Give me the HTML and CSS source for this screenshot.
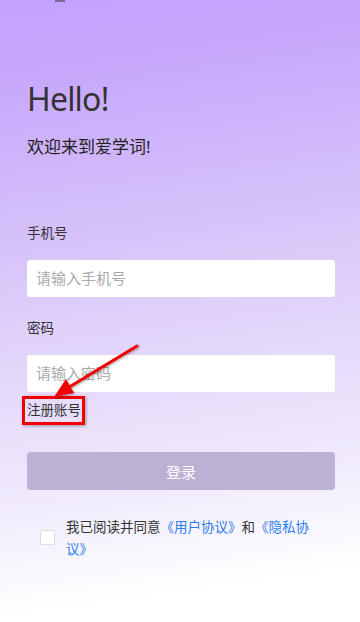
FILE: index.html
```html
<!DOCTYPE html>
<html lang="zh">
<head>
<meta charset="utf-8">
<title>爱学词 登录</title>
<link rel="stylesheet" href="styles.css">
</head>
<body>
<div class="page">
  <div class="notch"></div>
  <h1 class="hello">Hello!</h1>
  <p class="welcome">欢迎来到爱<span class="caret-char">学</span>词!</p>

  <div class="field">
    <label class="label">手机号</label>
    <div class="input">请输入手机号</div>
  </div>

  <div class="field field-pw">
    <label class="label">密码</label>
    <div class="input">请输入密码</div>
  </div>

  <div class="register-row">
    <span class="register">注册账号</span>
  </div>

  <button class="login">登录</button>

  <div class="agree">
    <span class="checkbox"></span>
    <p class="agree-text">我已阅读并同意<a class="link">《用户协议》</a>和<a class="link">《隐私协议》</a></p>
  </div>

  <div class="annot-box"></div>
  <svg class="annot-arrow" width="120" height="80" viewBox="0 0 120 80">
    <defs>
      <filter id="sh" x="-20%" y="-20%" width="140%" height="140%">
        <feDropShadow dx="1" dy="1" stdDeviation="1" flood-color="#000" flood-opacity="0.35"/>
      </filter>
    </defs>
    <g filter="url(#sh)">
      <line x1="101" y1="3" x2="30" y2="46" stroke="#f00000" stroke-width="3" stroke-linecap="round"/>
      <polygon points="18,54 30,36 38,50" fill="#f00000"/>
    </g>
  </svg>
</div>
</body>
</html>
```

FILE: styles.css
```css
* { box-sizing: border-box; }
html, body { margin: 0; padding: 0; }
body {
  width: 360px;
  height: 622px;
  overflow: hidden;
  font-family: "Noto Sans", "Noto Sans CJK SC", sans-serif;
  color: #333;
}
.page {
  position: relative;
  width: 360px;
  height: 622px;
  padding: 0 25px 0 27px;
  background: linear-gradient(172deg, #c3a2fe 0%, #c7a8fc 12%, #d5c0fa 35%, #e3d6fa 55%, #f0eafc 75%, #ffffff 92%, #ffffff 100%);
  display: flex;
  flex-direction: column;
}
.notch {
  position: absolute;
  left: 55px;
  top: 0;
  width: 10px;
  height: 2px;
  background: #7a6a95;
}
.hello {
  margin: 79px 0 0;
  font-size: 32px;
  font-weight: 400;
  line-height: 40px;
  letter-spacing: -0.8px;
  color: #333;
}
.welcome {
  margin: 15px 0 0;
  font-size: 17px;
  line-height: 26px;
  color: #222;
}
.caret-char { color: #222; }
.field {
  display: flex;
  flex-direction: column;
  margin-top: 62px;
}
.field-pw { margin-top: 20px; }
.label {
  font-size: 13.5px;
  line-height: 22px;
  color: #333;
}
.input {
  margin-top: 16px;
  height: 37px;
  background: #fff;
  border-radius: 3px;
  padding-left: 9px;
  font-size: 15px;
  line-height: 37px;
  color: #aaa;
  width: 308px;
}
.register-row {
  margin-top: 6px;
  height: 22px;
}
.register {
  font-size: 13.5px;
  line-height: 22px;
  color: #333;
}
.login {
  margin-top: 32px;
  width: 308px;
  height: 38px;
  border: none;
  border-radius: 4px;
  background: #bcb0d5;
  color: #fff;
  font-family: "Noto Sans", "Noto Sans CJK SC", sans-serif;
  font-size: 15px;
  padding: 0;
}
.agree {
  margin-top: 25px;
  display: flex;
  align-items: center;
  padding-left: 13px;
}
.checkbox {
  flex: none;
  width: 15px;
  height: 15px;
  background: #fff;
  border: 1px solid #ddd;
  border-radius: 2px;
}
.agree-text {
  margin: 0 0 0 11px;
  width: 252px;
  font-family: "Noto Sans CJK SC", sans-serif;
  font-size: 13.5px;
  line-height: 22px;
  color: #333;
  text-spacing-trim: space-all;
  font-feature-settings: "chws" 0, "halt" 0;
}
.link { color: #2b7cf0; }
.annot-box {
  position: absolute;
  left: 22px;
  top: 396px;
  width: 63px;
  height: 29px;
  border: 3px solid #f00000;
  box-shadow: 1px 1px 3px rgba(0,0,0,0.35);
}
.annot-arrow {
  position: absolute;
  left: 36px;
  top: 343px;
}
```
